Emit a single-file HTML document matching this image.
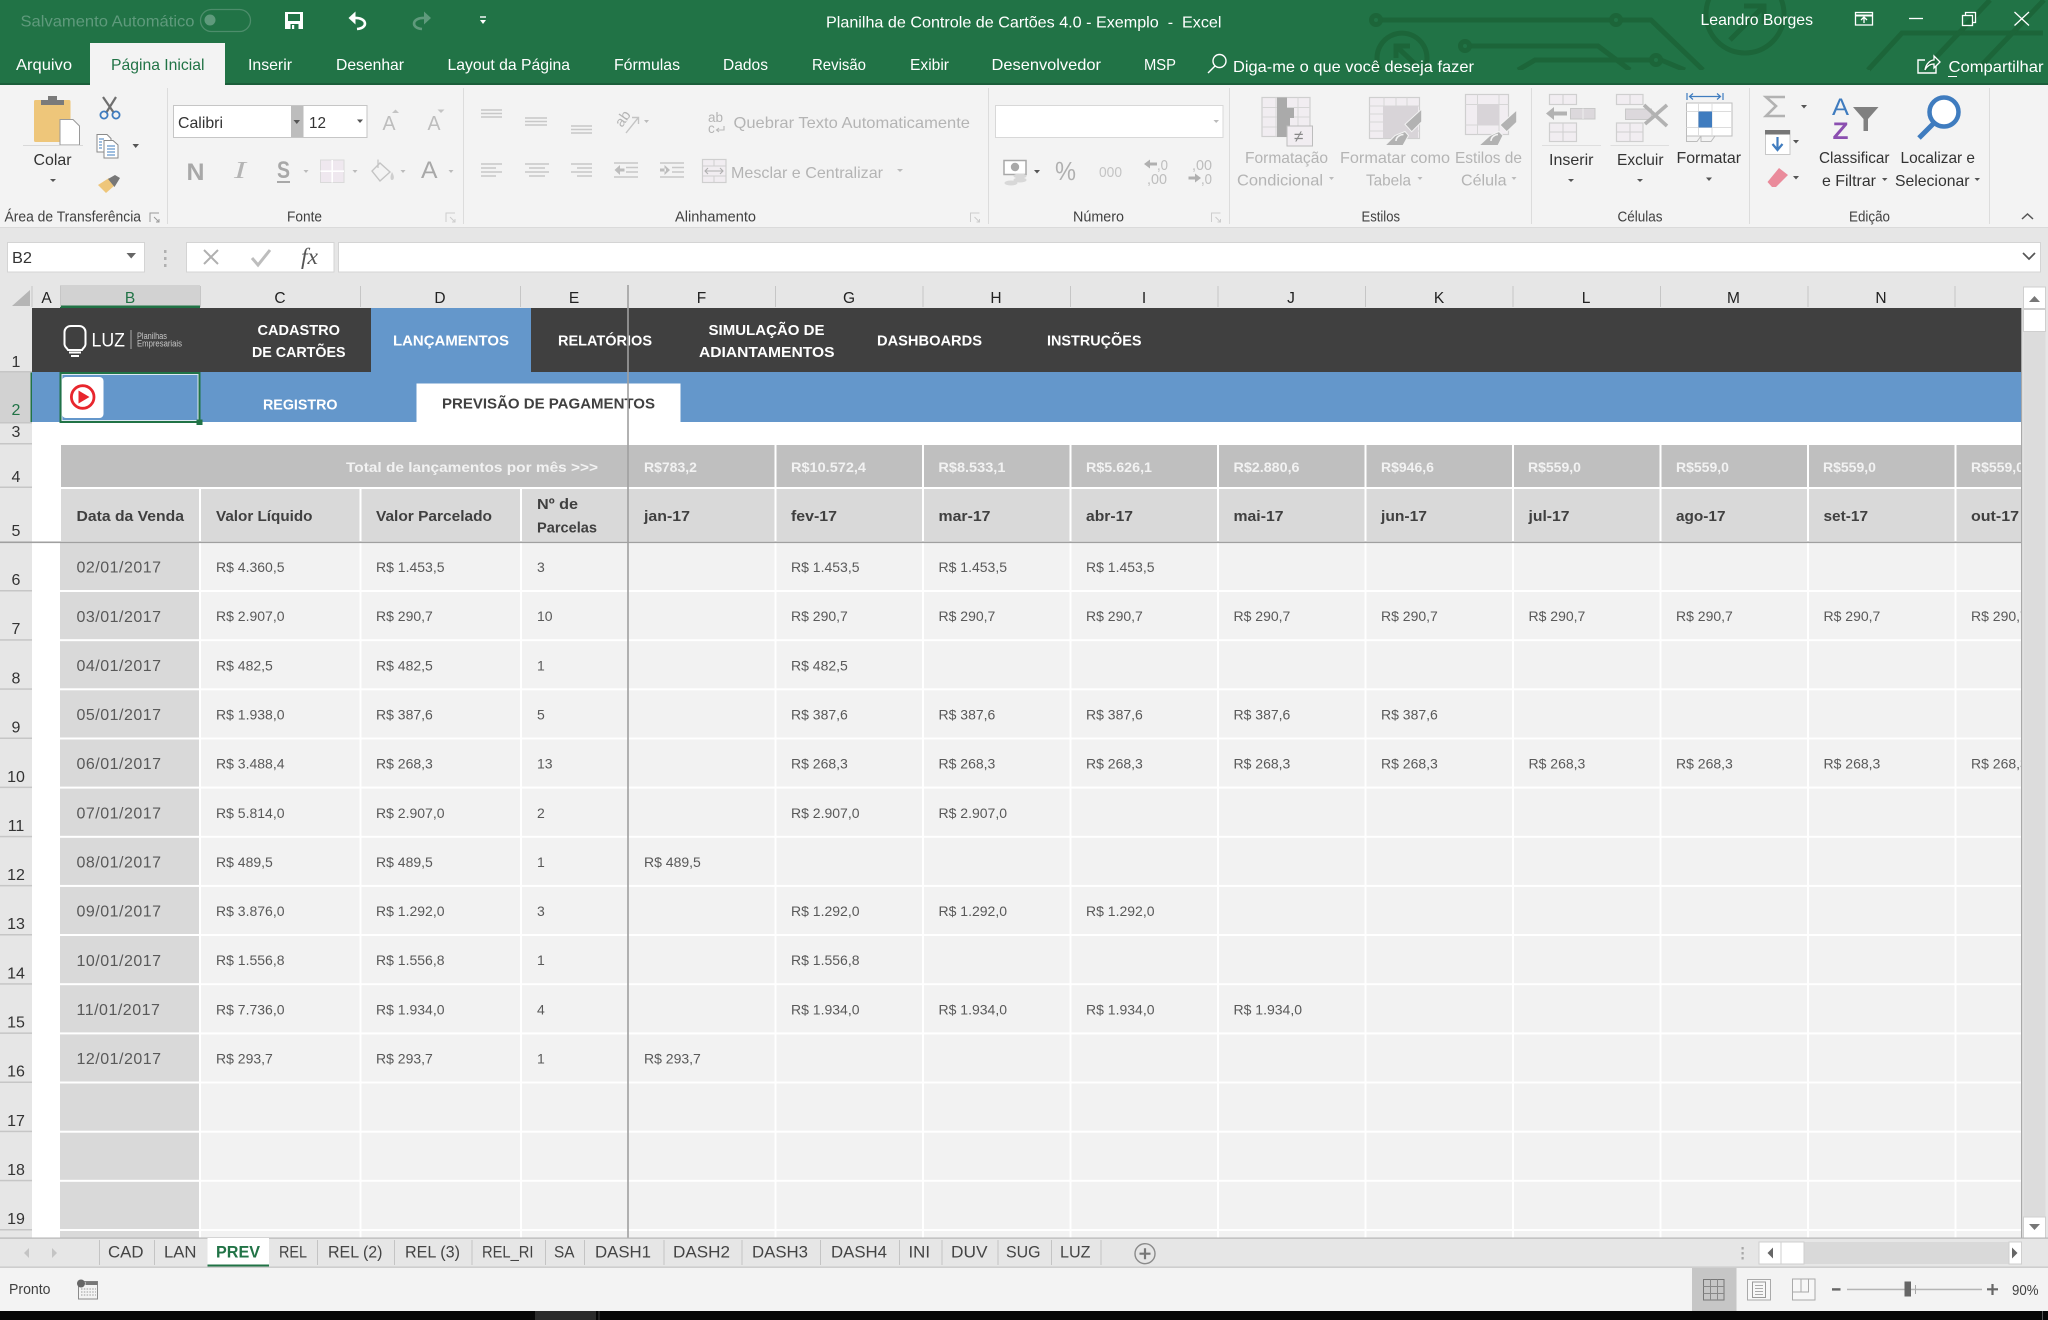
<!DOCTYPE html>
<html lang="pt-BR">
<head>
<meta charset="utf-8">
<title>Planilha de Controle de Cartões 4.0 - Exemplo - Excel</title>
<style>
html,body{margin:0;padding:0;background:#000;width:2048px;height:1320px;overflow:hidden}
svg{display:block}
text{font-family:"Liberation Sans",sans-serif;white-space:pre}
.w{fill:#fff;font-size:16px}
.tab{fill:#fff;font-size:16px}
.dim{fill:#b4b4b4;font-size:16px}
.blk{fill:#333;font-size:16px}
.lab{fill:#404040;font-size:14.5px}
.ch{fill:#222;font-size:15.5px;text-anchor:middle}
.rh{fill:#333;font-size:16px;text-anchor:middle}
.nav{fill:#fff;font-size:15px;font-weight:bold}
.tot{fill:#f2f2f2;font-size:14px;font-weight:bold}
.hd{fill:#404040;font-size:15px;font-weight:bold}
.d{fill:#595959;font-size:16px;letter-spacing:.5px}
.c{fill:#595959;font-size:14px}
.st{fill:#444;font-size:17px}
.g{fill:none;stroke:#c8c8c8;stroke-width:1.5}
.lt{fill:#f1edf1;stroke:#cfcfcf;stroke-width:1.2}
.tri{fill:#555}
.trl{fill:#bbb}
</style>
</head>
<body>
<svg width="2048" height="1320" viewBox="0 0 2048 1320" xmlns="http://www.w3.org/2000/svg">
<!-- backgrounds -->
<rect width="2048" height="1320" fill="#e6e6e6"/>
<rect width="2048" height="84" fill="#217346"/>
<rect y="83" width="2048" height="2" fill="#1b5e3a"/>
<rect y="85" width="2048" height="142" fill="#f3f3f3"/>
<rect y="227" width="2048" height="1" fill="#dadada"/>

<!-- circuit pattern -->
<g fill="none" stroke="#1c6539" stroke-width="5">
<path d="M1381 20H1611M1621 20H1651L1703 70"/>
<circle cx="1376" cy="20" r="4.5"/>
<circle cx="1616" cy="20" r="4.5"/>
<path d="M1470 46H1598L1630 70"/>
<circle cx="1465" cy="46" r="4.5"/>
<path d="M1518 70L1535 60H1651M1661 60L1685 70"/>
<circle cx="1656" cy="60" r="4.5"/>
<path d="M1380 70A25 25 0 1 1 1424 70"/>
<path d="M1415 64L1396 46M1396 58V46H1410"/>
<circle cx="1745" cy="14" r="39"/>
<path d="M1730 40L1762 8M1744 6H1764V24"/>
<path d="M1868 70L1902 33H2043"/>
<path d="M1924 70L1990 0M1977 70L2044 0"/>
</g>
<rect y="70" x="1350" width="520" height="13" fill="#217346"/>
<rect y="74" x="1870" width="178" height="9" fill="#217346"/>

<!-- title bar -->
<text x="20.5" y="26.5" style="fill:#5f9a7c;font-size:16px" textLength="174" lengthAdjust="spacingAndGlyphs">Salvamento Automático</text>
<rect x="200.5" y="9.5" width="50" height="22" rx="11" fill="none" stroke="#4d8d6b" stroke-width="1.3"/>
<circle cx="210" cy="20" r="5.5" fill="#5f9a7c"/>
<!-- save -->
<path d="M285 12H303V29H285Z" fill="#fff"/>
<rect x="288" y="14" width="12" height="7" fill="#217346"/>
<rect x="290.5" y="24" width="8" height="5" fill="#217346"/>
<rect x="292" y="25" width="2.2" height="4" fill="#fff"/>
<!-- undo redo -->
<path d="M348.5 18L355.5 11.5V24.5Z" fill="#fff"/>
<path d="M354 18C367 17 369 28 357 29" fill="none" stroke="#fff" stroke-width="2.6"/>
<path d="M431 18L424 11.5V24.5Z" fill="#5f9a7c"/>
<path d="M425 18C412 17 410 28 422 29" fill="none" stroke="#5f9a7c" stroke-width="2.6"/>
<path d="M480 17H486" stroke="#fff" stroke-width="1.4"/>
<path d="M480 20H486L483 24Z" fill="#fff"/>
<text x="826" y="27.5" class="w" textLength="395.5" lengthAdjust="spacingAndGlyphs">Planilha de Controle de Cartões 4.0 - Exemplo&#160; -&#160; Excel</text>
<text x="1700.5" y="25" class="w" textLength="112.5" lengthAdjust="spacingAndGlyphs">Leandro Borges</text>
<!-- window controls -->
<g fill="none" stroke="#fff" stroke-width="1.3">
<rect x="1855.5" y="12.5" width="17" height="12.5"/>
<path d="M1855.5 15.5H1872.5" stroke-width="2"/>
<path d="M1864 23V17.5M1861 20L1864 17L1867 20"/>
<path d="M1909 18.5H1923"/>
<rect x="1962.5" y="15.5" width="10" height="10"/>
<path d="M1965.5 15V12.5H1975.5V22.5H1973"/>
<path d="M2014.5 12L2029 25.5M2029 12L2014.5 25.5"/>
</g>

<!-- ribbon tabs -->
<rect x="90" y="43" width="135" height="42" fill="#f3f3f3"/>
<text x="16" y="70" class="tab" textLength="56" lengthAdjust="spacingAndGlyphs">Arquivo</text>
<text x="111" y="70" style="fill:#217346;font-size:16px" textLength="93.5" lengthAdjust="spacingAndGlyphs">Página Inicial</text>
<text x="248" y="70" class="tab" textLength="44" lengthAdjust="spacingAndGlyphs">Inserir</text>
<text x="336" y="70" class="tab" textLength="68" lengthAdjust="spacingAndGlyphs">Desenhar</text>
<text x="447.5" y="70" class="tab" textLength="122.5" lengthAdjust="spacingAndGlyphs">Layout da Página</text>
<text x="614" y="70" class="tab" textLength="66" lengthAdjust="spacingAndGlyphs">Fórmulas</text>
<text x="723" y="70" class="tab" textLength="45" lengthAdjust="spacingAndGlyphs">Dados</text>
<text x="812" y="70" class="tab" textLength="54" lengthAdjust="spacingAndGlyphs">Revisão</text>
<text x="910" y="70" class="tab" textLength="39" lengthAdjust="spacingAndGlyphs">Exibir</text>
<text x="991.5" y="70" class="tab" textLength="109.5" lengthAdjust="spacingAndGlyphs">Desenvolvedor</text>
<text x="1144" y="70" class="tab" textLength="32" lengthAdjust="spacingAndGlyphs">MSP</text>
<circle cx="1219.5" cy="61" r="6.5" fill="none" stroke="#fff" stroke-width="1.4"/>
<path d="M1215 66L1208 73" stroke="#fff" stroke-width="1.4"/>
<text x="1233" y="72" class="tab" textLength="241" lengthAdjust="spacingAndGlyphs">Diga-me o que você deseja fazer</text>
<path d="M1925 60H1918V73H1936V66" fill="none" stroke="#fff" stroke-width="1.4"/>
<path d="M1925 70C1926 63 1931 60 1934 60V56L1940 62L1934 68V64C1930 64 1927 66 1925 70Z" fill="none" stroke="#fff" stroke-width="1.3"/>
<text x="1948.5" y="72" class="tab" textLength="95" lengthAdjust="spacingAndGlyphs">Compartilhar</text>
<rect x="1948" y="76" width="9" height="1" fill="#fff"/>

<!-- ribbon separators -->
<g fill="#dcdcdc">
<rect x="167" y="88" width="1" height="136"/>
<rect x="463" y="88" width="1" height="136"/>
<rect x="988" y="88" width="1" height="136"/>
<rect x="1229" y="88" width="1" height="136"/>
<rect x="1531" y="88" width="1" height="136"/>
<rect x="1749" y="88" width="1" height="136"/>
<rect x="1989" y="88" width="1" height="136"/>
</g>
<!-- group labels -->
<text x="4.5" y="221.5" class="lab" textLength="136.5" lengthAdjust="spacingAndGlyphs">Área de Transferência</text>
<text x="287" y="221.5" class="lab" textLength="35" lengthAdjust="spacingAndGlyphs">Fonte</text>
<text x="675" y="221.5" class="lab" textLength="81" lengthAdjust="spacingAndGlyphs">Alinhamento</text>
<text x="1073" y="221.5" class="lab" textLength="51" lengthAdjust="spacingAndGlyphs">Número</text>
<text x="1361.5" y="221.5" class="lab" textLength="38.5" lengthAdjust="spacingAndGlyphs">Estilos</text>
<text x="1617.5" y="221.5" class="lab" textLength="45" lengthAdjust="spacingAndGlyphs">Células</text>
<text x="1849" y="221.5" class="lab" textLength="41" lengthAdjust="spacingAndGlyphs">Edição</text>
<!-- launchers -->
<g fill="none" stroke="#9a9a9a" stroke-width="1">
<path d="M150 222V213H159M154 217L159 222M156 222H159V219"/>
</g>
<g fill="none" stroke="#cdcdcd" stroke-width="1">
<path d="M446 222V213H455M450 217L455 222M452 222H455V219"/>
<path d="M970.5 222V213H979.5M974.5 217L979.5 222M976.5 222H979.5V219"/>
<path d="M1211.5 222V213H1220.5M1215.5 217L1220.5 222M1217.5 222H1220.5V219"/>
</g>
<path d="M2022 219L2027.5 214L2033 219" fill="none" stroke="#555" stroke-width="1.5"/>

<!-- clipboard group -->
<rect x="34" y="100" width="36.5" height="42" rx="1.5" fill="#eec67a"/>
<path d="M41 105V100H48V96H57V100H64V105Z" fill="#7a7a7a"/>
<path d="M60 119.5H73L79.5 126V145H60Z" fill="#fff" stroke="#9a9a9a" stroke-width="1"/>
<rect x="23" y="145" width="60" height="1" fill="#d8d8d8"/>
<text x="33.5" y="165" class="blk" textLength="38" lengthAdjust="spacingAndGlyphs">Colar</text>
<path class="tri" d="M50 179H56L53 182Z"/>
<path d="M103 97L114 113M116 97L106 113" stroke="#6f6f6f" stroke-width="2.2" fill="none"/>
<circle cx="104" cy="115" r="3.6" fill="none" stroke="#3f7cbf" stroke-width="1.8"/>
<circle cx="116" cy="115" r="3.6" fill="none" stroke="#3f7cbf" stroke-width="1.8"/>
<path d="M97 134.5H107L111 138.5V152H97Z" fill="#fff" stroke="#8a8a8a"/>
<path d="M104 140.5H113L118 145V158H104Z" fill="#fff" stroke="#8a8a8a"/>
<path d="M107 146H115M107 149H115M107 152H115M107 155H115M99 139H104M99 142H102M99 145H102M99 148H102" stroke="#3f7cbf" stroke-width="1"/>
<path class="tri" d="M132.5 144H139L135.7 148Z"/>
<path d="M98 185L109 178L114 186L106 193Z" fill="#eec67a"/>
<path d="M108 179L115 175L120 178L114.5 187Z" fill="#777"/>

<!-- font group -->
<rect x="173.5" y="105.5" width="193.5" height="32" fill="#fff" stroke="#c6c6c6"/>
<rect x="291" y="106" width="12.5" height="31" fill="#bdbdbd"/>
<path class="tri" d="M293.5 120H300L296.8 124Z"/>
<text x="178" y="128" class="blk" textLength="45" lengthAdjust="spacingAndGlyphs">Calibri</text>
<text x="309" y="128" class="blk" textLength="17" lengthAdjust="spacingAndGlyphs">12</text>
<path class="tri" d="M357 119.5H363L360 123Z"/>
<text x="382.5" y="130" style="fill:#bdbdbd;font-size:20px" textLength="13" lengthAdjust="spacingAndGlyphs">A</text>
<path d="M392 113L395.5 109.5L399 113Z" fill="#c4c4c4"/>
<text x="427.5" y="130" style="fill:#bdbdbd;font-size:20px" textLength="13" lengthAdjust="spacingAndGlyphs">A</text>
<path d="M437.5 109.5H444.5L441 113Z" fill="#c4c4c4"/>
<text x="186.5" y="180" style="fill:#a8a8a8;font-size:24px;font-weight:bold" textLength="18" lengthAdjust="spacingAndGlyphs">N</text>
<text x="234" y="178" style="fill:#b4b4b4;font-size:24px;font-style:italic;font-family:'Liberation Serif',serif" textLength="12" lengthAdjust="spacingAndGlyphs">I</text>
<text x="277" y="178" style="fill:#a8a8a8;font-size:24px;font-weight:bold" textLength="13" lengthAdjust="spacingAndGlyphs">S</text>
<rect x="277" y="181" width="13" height="2" fill="#a8a8a8"/>
<path class="trl" d="M303.5 170H308.5L306 173Z"/>
<rect x="320.5" y="160" width="23.5" height="22.5" fill="#efe8ef" stroke="#dadada"/>
<path d="M332.2 160V182.5M320.5 171.2H344" stroke="#fff" stroke-width="1.6"/>
<path class="trl" d="M352.5 170H357.5L355 173Z"/>
<path d="M380 163L390 172L380 181L372 171Z" fill="none" stroke="#c4c4c4" stroke-width="1.4"/>
<path d="M378 159.5V168" stroke="#c4c4c4" stroke-width="1.2"/>
<path d="M392 172C395 177 394 180 392 180C390 180 390 176 392 172Z" fill="#cfcfcf"/>
<path class="trl" d="M400.5 170H405.5L403 173Z"/>
<text x="421" y="178" style="fill:#a8a8a8;font-size:24px" textLength="16.5" lengthAdjust="spacingAndGlyphs">A</text>
<path class="trl" d="M448.5 170H453.5L451 173Z"/>

<!-- alignment group -->
<g class="g">
<path d="M481 110H502M481 113.5H502M481 117H502"/>
<path d="M525 118H547M525 121.5H547M525 125H547"/>
<path d="M571 126H592M571 129.5H592M571 133H592"/>
<path d="M481 164H502M481 168H496M481 172H502M481 176H496"/>
<path d="M525 164H549M529 168H545M525 172H549M529 176H545"/>
<path d="M571 164H592M577 168H592M571 172H592M577 176H592"/>
<path d="M614 163H638M626 167.5H638M626 172H638M614 177H638"/>
<path d="M660 163H684M672 167.5H684M672 172H684M660 177H684"/>
</g>
<path d="M614.5 170L620 165V175ZM619 168.5H624.5V171.5H619Z" fill="#bdbdbd"/>
<path d="M670 170L664.5 165V175ZM660 168.5H666V171.5H660Z" fill="#bdbdbd"/>
<text x="0" y="0" transform="translate(622,128) rotate(-55)" style="fill:#b4b4b4;font-size:14.5px">ab</text>
<path d="M626 133L638 118M632 117.5H638.5V124" fill="none" stroke="#c4c4c4" stroke-width="1.4"/>
<path class="trl" d="M644 120H649L646.5 123Z"/>
<text x="708" y="122" style="fill:#b4b4b4;font-size:13.5px">ab</text>
<text x="708" y="133" style="fill:#b4b4b4;font-size:13.5px">c</text>
<path d="M724 126V130H717M719 128L716.5 130L719 132" fill="none" stroke="#b8b8b8" stroke-width="1.1"/>
<text x="733.5" y="128" class="dim" textLength="236.5" lengthAdjust="spacingAndGlyphs">Quebrar Texto Automaticamente</text>
<rect x="702.5" y="159.5" width="23.5" height="23" class="lt"/>
<path d="M702.5 166H726M702.5 176H726M714 159.5V166M714 176V182.5" fill="none" stroke="#cfcfcf"/>
<path d="M705 171H723M708 168L705 171L708 174M720 168L723 171L720 174" fill="none" stroke="#b0b0b0" stroke-width="1.1"/>
<text x="731" y="178" class="dim" textLength="152" lengthAdjust="spacingAndGlyphs">Mesclar e Centralizar</text>
<path class="trl" d="M897 169H903L900 172Z"/>

<!-- number group -->
<rect x="995.5" y="105.5" width="227.5" height="32" fill="#fff" stroke="#d8d8d8"/>
<path class="trl" d="M1213.5 120H1219L1216.2 123Z"/>
<rect x="1004" y="160.5" width="22" height="14" fill="#fff" stroke="#a8a8a8" stroke-width="1.5"/>
<circle cx="1015" cy="167" r="4.2" fill="#a8a8a8"/>
<ellipse cx="1020" cy="176" rx="6.5" ry="2.5" fill="#d8d8d8"/>
<ellipse cx="1020" cy="180" rx="6.5" ry="2.5" fill="#d8d8d8"/>
<ellipse cx="1011" cy="183" rx="6.5" ry="2.5" fill="#d8d8d8"/>
<path class="tri" d="M1034 170H1040L1037 173.5Z"/>
<text x="1055" y="180" style="fill:#b0b0b0;font-size:26px" textLength="21" lengthAdjust="spacingAndGlyphs">%</text>
<text x="1099" y="177" style="fill:#c4c4c4;font-size:15px" textLength="23" lengthAdjust="spacingAndGlyphs">000</text>
<path d="M1144 164L1150 159.5V162.5H1157V165.5H1150V168.5Z" fill="#b0b0b0"/>
<text x="1157" y="170" style="fill:#bdbdbd;font-size:15px" textLength="11" lengthAdjust="spacingAndGlyphs">,0</text>
<text x="1147" y="184" style="fill:#bdbdbd;font-size:15px" textLength="20" lengthAdjust="spacingAndGlyphs">,00</text>
<text x="1192" y="170" style="fill:#bdbdbd;font-size:15px" textLength="20" lengthAdjust="spacingAndGlyphs">,00</text>
<path d="M1201 178L1195 173.5V176.5H1188.5V179.5H1195V182.5Z" fill="#b0b0b0"/>
<text x="1201" y="184" style="fill:#bdbdbd;font-size:15px" textLength="11" lengthAdjust="spacingAndGlyphs">,0</text>

<!-- styles group -->
<rect x="1262" y="97.5" width="48" height="39" class="lt"/>
<path d="M1262 107.5H1310M1262 117H1310M1262 127H1310M1276 97.5V136.5M1298 97.5V136.5" fill="none" stroke="#d6d6d6"/>
<path d="M1277 97.5H1287V108H1294V118H1290V127H1287V137H1277Z" fill="#aaa"/>
<rect x="1287" y="126" width="25.5" height="20" fill="#f1edf1" stroke="#bdbdbd"/>
<text x="1294" y="142" style="fill:#888;font-size:17px">≠</text>
<text x="1245" y="163" class="dim" textLength="83" lengthAdjust="spacingAndGlyphs">Formatação</text>
<text x="1237" y="185.5" class="dim" textLength="86" lengthAdjust="spacingAndGlyphs">Condicional</text>
<path class="trl" d="M1329 177H1334L1331.5 180Z"/>

<rect x="1369.5" y="97.5" width="50" height="41" class="lt"/>
<path d="M1369.5 106H1419.5M1369.5 114H1419.5M1369.5 122H1419.5M1369.5 131H1419.5M1384 97.5V138.5M1396 97.5V138.5M1407 97.5V138.5" fill="none" stroke="#d6d6d6"/>
<rect x="1383" y="106" width="35" height="32" fill="#d8d4d8"/>
<path d="M1421.7 109V121.7L1411.7 131.7L1405 124.3Z" fill="#b2b2b2" stroke="#f3f3f3" stroke-width="1"/>
<path d="M1385 145.5L1395 135.5L1405 131.5L1408.5 135.5L1403 145.5Z" fill="#b2b2b2" stroke="#f3f3f3" stroke-width="1"/>
<path d="M1396 141C1396 137 1400 134.5 1403.5 134.5" fill="none" stroke="#f3f3f3" stroke-width="1.6"/>
<text x="1340" y="163" class="dim" textLength="110" lengthAdjust="spacingAndGlyphs">Formatar como</text>
<text x="1366" y="185.5" class="dim" textLength="45" lengthAdjust="spacingAndGlyphs">Tabela</text>
<path class="trl" d="M1417.5 177H1422.5L1420 180Z"/>

<rect x="1465.5" y="94.5" width="43" height="40" class="lt"/>
<path d="M1465.5 104.5H1508.5M1465.5 125H1508.5M1477.5 94.5V134.5M1499 94.5V134.5" fill="none" stroke="#d6d6d6"/>
<rect x="1477.5" y="104.5" width="21.5" height="20.5" fill="#d8d4d8"/>
<path d="M1516.7 110V122.3L1506.7 131.7L1500 125Z" fill="#b2b2b2" stroke="#f3f3f3" stroke-width="1"/>
<path d="M1479 145.5L1490 135.5L1499 131.5L1503 135.5L1498 145.5Z" fill="#b2b2b2" stroke="#f3f3f3" stroke-width="1"/>
<path d="M1491 141C1491 137 1495 134.5 1498 134.5" fill="none" stroke="#f3f3f3" stroke-width="1.6"/>
<text x="1455" y="163" class="dim" textLength="67" lengthAdjust="spacingAndGlyphs">Estilos de</text>
<text x="1461" y="185.5" class="dim" textLength="45.5" lengthAdjust="spacingAndGlyphs">Célula</text>
<path class="trl" d="M1511.5 177H1516.5L1514 180Z"/>

<!-- cells group -->
<rect x="1549.5" y="94.5" width="27" height="10" class="lt"/><path d="M1563 94.5V104.5" stroke="#cfcfcf"/>
<path d="M1546 113.5L1554 107V111.5H1567V115.5H1554V120Z" fill="#b2b2b2"/>
<rect x="1570.5" y="108.5" width="24.5" height="10.5" fill="#dcd8dc" stroke="#c8c8c8"/><path d="M1583 108.5V119" stroke="#eee"/>
<rect x="1549.5" y="123" width="27" height="18.5" class="lt"/><path d="M1563 123V141.5M1549.5 132H1576.5" stroke="#cfcfcf"/>
<rect x="1542" y="145" width="59" height="1" fill="#dedede"/>
<text x="1549" y="165" class="blk" textLength="44.5" lengthAdjust="spacingAndGlyphs">Inserir</text>
<path class="tri" d="M1568 179H1574L1571 182Z"/>

<rect x="1616.5" y="94.5" width="26.5" height="10" class="lt"/><path d="M1630 94.5V104.5" stroke="#cfcfcf"/>
<rect x="1625.5" y="109" width="26" height="10.5" fill="#dcd8dc" stroke="#c8c8c8"/>
<path d="M1644 105L1667 126M1667 105L1645 124" stroke="#b2b2b2" stroke-width="3.6" fill="none"/>
<rect x="1616.5" y="123" width="26.5" height="18.5" class="lt"/><path d="M1630 123V141.5M1616.5 132H1643" stroke="#cfcfcf"/>
<rect x="1610.5" y="145" width="58.5" height="1" fill="#dedede"/>
<text x="1617" y="165" class="blk" textLength="46.5" lengthAdjust="spacingAndGlyphs">Excluir</text>
<path class="tri" d="M1637 179H1643L1640 182Z"/>

<path d="M1690 96.5H1720M1693 93.5L1689.5 96.5L1693 99.5M1717 93.5L1720.5 96.5L1717 99.5M1687 93V100M1723 93V100" fill="none" stroke="#3f7cbf" stroke-width="1.2"/>
<rect x="1686.5" y="103" width="45.5" height="33" fill="#fff" stroke="#bcbcbc"/>
<path d="M1686.5 111.5H1732M1686.5 127.5H1732M1698.5 103V136M1712 103V136" stroke="#dcdcdc" fill="none"/>
<rect x="1698.5" y="111.5" width="13.5" height="16" fill="#3f7cbf"/>
<path d="M1686.5 136V141.5H1697L1701 136M1701 136V141.5H1711L1715 136" fill="none" stroke="#bcbcbc"/>
<text x="1676.5" y="163" class="blk" textLength="64.5" lengthAdjust="spacingAndGlyphs">Formatar</text>
<path class="tri" d="M1706 177.5H1712L1709 181Z"/>

<!-- editing group -->
<path d="M1785 97H1766L1776 106L1766 116H1785" fill="none" stroke="#b2b2b2" stroke-width="2.6"/>
<path class="tri" d="M1801 105H1807L1804 108.5Z"/>
<rect x="1765.5" y="130.5" width="24.5" height="24" fill="#fff" stroke="#c8c8c8"/>
<rect x="1765" y="130" width="25" height="4.5" fill="#777"/>
<path d="M1777.5 137V149M1772.5 144L1777.5 150L1782.5 144" fill="none" stroke="#3f7cbf" stroke-width="2.2"/>
<path class="tri" d="M1793 140H1799L1796 143.5Z"/>
<path d="M1779 168L1788 175L1776 187H1772L1767.5 182Z" fill="#ea8b9b"/>
<path class="tri" d="M1793 176H1799L1796 179.5Z"/>
<text x="1832" y="115" style="fill:#3f7cbf;font-size:24px" textLength="17" lengthAdjust="spacingAndGlyphs">A</text>
<text x="1832.5" y="139" style="fill:#8b4fb0;font-size:24px;font-weight:bold" textLength="16" lengthAdjust="spacingAndGlyphs">Z</text>
<path d="M1853 107H1878.5L1868 119V131H1863.5V119Z" fill="#808080"/>
<text x="1819" y="163" class="blk" textLength="70.5" lengthAdjust="spacingAndGlyphs">Classificar</text>
<text x="1822" y="186" class="blk" textLength="54" lengthAdjust="spacingAndGlyphs">e Filtrar</text>
<path class="tri" d="M1882 178H1887.5L1884.7 181Z"/>
<circle cx="1944" cy="112" r="14.5" fill="#fff" stroke="#3f7cbf" stroke-width="4.5"/>
<path d="M1933 124L1919 138" stroke="#3f7cbf" stroke-width="5"/>
<text x="1900.5" y="163" class="blk" textLength="74.5" lengthAdjust="spacingAndGlyphs">Localizar e</text>
<text x="1895" y="186" class="blk" textLength="74.5" lengthAdjust="spacingAndGlyphs">Selecionar</text>
<path class="tri" d="M1974.5 178H1980L1977.2 181Z"/>

<!-- formula bar -->
<rect x="7.5" y="242.5" width="137" height="29.5" fill="#fff" stroke="#d4d4d4"/>
<text x="12" y="263" class="blk" textLength="20" lengthAdjust="spacingAndGlyphs">B2</text>
<path d="M126.5 253H136L131.2 258.5Z" fill="#666"/>
<g fill="#b0b0b0"><rect x="164" y="250" width="2.5" height="3"/><rect x="164" y="257" width="2.5" height="3"/><rect x="164" y="264" width="2.5" height="3"/></g>
<rect x="186.5" y="242.5" width="147.5" height="29.5" fill="#fff" stroke="#d4d4d4"/>
<path d="M204 250L218 264M218 250L204 264" stroke="#b0b0b0" stroke-width="2" fill="none"/>
<path d="M252 258L258 265L270 250" stroke="#bdbdbd" stroke-width="3" fill="none"/>
<text x="301" y="264" style="fill:#555;font-family:'Liberation Serif',serif;font-style:italic;font-size:23px" textLength="17" lengthAdjust="spacingAndGlyphs">fx</text>
<rect x="338.5" y="242.5" width="1702" height="29.5" fill="#fff" stroke="#d4d4d4"/>
<path d="M2023 253L2029 259L2035 253" fill="none" stroke="#555" stroke-width="1.7"/>

<!-- sheet area -->
<rect x="32" y="308" width="1990" height="930" fill="#fff"/>
<!-- column headers -->
<rect x="0" y="285" width="2022" height="23" fill="#e6e6e6"/>
<rect x="60" y="285" width="140" height="21" fill="#d2d2d2"/>
<rect x="60" y="305.5" width="140" height="2.5" fill="#217346"/>
<path d="M12 306H30V290Z" fill="#b5b5b5"/>
<g fill="#c6c6c6">
<rect x="31.5" y="286" width="1" height="21"/><rect x="60" y="286" width="1" height="21"/><rect x="200" y="286" width="1" height="21"/><rect x="360" y="286" width="1" height="21"/><rect x="520" y="286" width="1" height="21"/><rect x="775" y="286" width="1" height="21"/><rect x="922.5" y="286" width="1" height="21"/><rect x="1070" y="286" width="1" height="21"/><rect x="1217.5" y="286" width="1" height="21"/><rect x="1365" y="286" width="1" height="21"/><rect x="1512.5" y="286" width="1" height="21"/><rect x="1660" y="286" width="1" height="21"/><rect x="1807.5" y="286" width="1" height="21"/><rect x="1954.5" y="286" width="1" height="21"/>
</g>
<text x="46.5" y="303" class="ch">A</text>
<text x="130" y="303" class="ch" style="fill:#217346">B</text>
<text x="280" y="303" class="ch">C</text>
<text x="440" y="303" class="ch">D</text>
<text x="574" y="303" class="ch">E</text>
<text x="701.5" y="303" class="ch">F</text>
<text x="849" y="303" class="ch">G</text>
<text x="996" y="303" class="ch">H</text>
<text x="1144" y="303" class="ch">I</text>
<text x="1291" y="303" class="ch">J</text>
<text x="1439" y="303" class="ch">K</text>
<text x="1586" y="303" class="ch">L</text>
<text x="1733.5" y="303" class="ch">M</text>
<text x="1881" y="303" class="ch">N</text>

<!-- row headers -->
<rect x="0" y="308" width="32" height="930" fill="#e6e6e6"/>
<rect x="0" y="372" width="32" height="50" fill="#d2d2d2"/>
<rect x="30.5" y="372" width="2" height="50" fill="#217346"/>
<g fill="#c6c6c6">
<rect y="371" width="32" height="1.5"/><rect y="422" width="32" height="1.5"/><rect y="443" width="32" height="1.5"/><rect y="486.5" width="32" height="1.5"/><rect y="590" width="32" height="1.5"/><rect y="639.2" width="32" height="1.5"/><rect y="688.3" width="32" height="1.5"/><rect y="737.5" width="32" height="1.5"/><rect y="786.6" width="32" height="1.5"/><rect y="835.8" width="32" height="1.5"/><rect y="884.9" width="32" height="1.5"/><rect y="934" width="32" height="1.5"/><rect y="983.2" width="32" height="1.5"/><rect y="1032.4" width="32" height="1.5"/><rect y="1081.5" width="32" height="1.5"/><rect y="1130.7" width="32" height="1.5"/><rect y="1179.8" width="32" height="1.5"/><rect y="1229" width="32" height="1.5"/>
</g>
<text x="16" y="367" class="rh">1</text>
<text x="16" y="415" class="rh" style="fill:#217346">2</text>
<text x="16" y="437" class="rh">3</text>
<text x="16" y="482.2" class="rh">4</text>
<text x="16" y="536.2" class="rh">5</text>
<text x="16" y="585.2" class="rh">6</text>
<text x="16" y="634.2" class="rh">7</text>
<text x="16" y="683.5" class="rh">8</text>
<text x="16" y="732.7" class="rh">9</text>
<text x="16" y="781.8" class="rh">10</text>
<text x="16" y="831" class="rh">11</text>
<text x="16" y="880.1" class="rh">12</text>
<text x="16" y="929.2" class="rh">13</text>
<text x="16" y="978.4" class="rh">14</text>
<text x="16" y="1027.6" class="rh">15</text>
<text x="16" y="1076.7" class="rh">16</text>
<text x="16" y="1125.9" class="rh">17</text>
<text x="16" y="1175" class="rh">18</text>
<text x="16" y="1224.2" class="rh">19</text>

<!-- nav band -->
<rect x="32" y="308" width="1990" height="64" fill="#404040"/>
<rect x="371" y="308" width="160" height="64" fill="#6497cb"/>
<rect x="32" y="372" width="1990" height="50" fill="#6497cb"/>
<rect x="416.5" y="383.5" width="264" height="38.5" fill="#fff"/>
<!-- logo -->
<path d="M71 326H79C83 326 85.5 329 85.5 332V344C85.5 347 83 348 82 350H68C67 348 64.5 347 64.5 344V332C64.5 329 67 326 71 326Z" fill="none" stroke="#fff" stroke-width="2"/>
<path d="M69 352.5H81M71 356H79" stroke="#fff" stroke-width="2"/>
<text x="91.5" y="346.5" style="fill:#fff;font-size:19.5px" textLength="33.5" lengthAdjust="spacingAndGlyphs">LUZ</text>
<rect x="130.5" y="330" width="1" height="19" fill="#aaa"/>
<text x="137" y="339" style="fill:#c8c8c8;font-size:9px" textLength="30" lengthAdjust="spacingAndGlyphs">Planilhas</text>
<text x="137" y="346.7" style="fill:#c8c8c8;font-size:9px" textLength="45" lengthAdjust="spacingAndGlyphs">Empresariais</text>
<!-- nav labels -->
<text x="257.5" y="335" class="nav" textLength="82.5" lengthAdjust="spacingAndGlyphs">CADASTRO</text>
<text x="252" y="357" class="nav" textLength="93.5" lengthAdjust="spacingAndGlyphs">DE CARTÕES</text>
<text x="393" y="345.7" class="nav" textLength="116" lengthAdjust="spacingAndGlyphs">LANÇAMENTOS</text>
<text x="558" y="345.7" class="nav" textLength="94" lengthAdjust="spacingAndGlyphs">RELATÓRIOS</text>
<text x="708.5" y="335" class="nav" textLength="116" lengthAdjust="spacingAndGlyphs">SIMULAÇÃO DE</text>
<text x="699" y="357" class="nav" textLength="135.5" lengthAdjust="spacingAndGlyphs">ADIANTAMENTOS</text>
<text x="877" y="345.7" class="nav" textLength="105" lengthAdjust="spacingAndGlyphs">DASHBOARDS</text>
<text x="1047" y="345.7" class="nav" textLength="94.5" lengthAdjust="spacingAndGlyphs">INSTRUÇÕES</text>
<text x="263" y="409.4" class="nav" textLength="74.5" lengthAdjust="spacingAndGlyphs">REGISTRO</text>
<text x="442" y="408.6" class="nav" style="fill:#404040" textLength="213" lengthAdjust="spacingAndGlyphs">PREVISÃO DE PAGAMENTOS</text>
<!-- B2 selection + play button -->
<rect x="62" y="374.5" width="136" height="46" fill="none" stroke="#dfe9f3" stroke-width="1"/>
<rect x="60.5" y="373" width="139" height="49" fill="none" stroke="#217346" stroke-width="2"/>
<rect x="62" y="377" width="41.5" height="41" rx="4" fill="#fff"/>
<circle cx="82.7" cy="397" r="11.3" fill="none" stroke="#e8262d" stroke-width="2.8"/>
<path d="M78.5 390.5L89.5 397L78.5 403.5Z" fill="#e8262d"/>
<rect x="196.5" y="419.5" width="6" height="5.5" fill="#217346"/>

<!-- table fills -->
<rect x="61" y="445" width="1961" height="42" fill="#bfbfbf"/>
<rect x="61" y="489" width="1961" height="52" fill="#d9d9d9"/>
<rect x="60" y="543" width="1962" height="695" fill="#f2f2f2"/>
<rect x="60" y="543" width="139" height="695" fill="#d9d9d9"/>
<!-- white grid lines -->
<g fill="#fff">
<rect x="60" y="590" width="1962" height="2"/><rect x="60" y="639.2" width="1962" height="2"/><rect x="60" y="688.3" width="1962" height="2"/><rect x="60" y="737.5" width="1962" height="2"/><rect x="60" y="786.6" width="1962" height="2"/><rect x="60" y="835.8" width="1962" height="2"/><rect x="60" y="884.9" width="1962" height="2"/><rect x="60" y="934" width="1962" height="2"/><rect x="60" y="983.2" width="1962" height="2"/><rect x="60" y="1032.4" width="1962" height="2"/><rect x="60" y="1081.5" width="1962" height="2"/><rect x="60" y="1130.7" width="1962" height="2"/><rect x="60" y="1179.8" width="1962" height="2"/><rect x="60" y="1229" width="1962" height="2"/>
<rect x="199" y="489" width="2" height="749"/><rect x="359.5" y="489" width="2" height="749"/><rect x="520" y="489" width="2" height="749"/>
<rect x="774.5" y="445" width="2" height="793"/><rect x="922" y="445" width="2" height="793"/><rect x="1069.5" y="445" width="2" height="793"/><rect x="1217" y="445" width="2" height="793"/><rect x="1364.5" y="445" width="2" height="793"/><rect x="1512" y="445" width="2" height="793"/><rect x="1659.5" y="445" width="2" height="793"/><rect x="1807" y="445" width="2" height="793"/><rect x="1954.5" y="445" width="2" height="793"/>
</g>

<!-- row 4 -->
<text x="346" y="472" class="tot" textLength="252" lengthAdjust="spacingAndGlyphs">Total de lançamentos por mês &gt;&gt;&gt;</text>
<text x="644" y="472" class="tot">R$783,2</text>
<text x="791" y="472" class="tot" textLength="75" lengthAdjust="spacingAndGlyphs">R$10.572,4</text>
<text x="938.4" y="472" class="tot" textLength="67" lengthAdjust="spacingAndGlyphs">R$8.533,1</text>
<text x="1086" y="472" class="tot" textLength="66" lengthAdjust="spacingAndGlyphs">R$5.626,1</text>
<text x="1233.5" y="472" class="tot" textLength="66" lengthAdjust="spacingAndGlyphs">R$2.880,6</text>
<text x="1381" y="472" class="tot">R$946,6</text>
<text x="1528" y="472" class="tot">R$559,0</text>
<text x="1676" y="472" class="tot">R$559,0</text>
<text x="1823" y="472" class="tot">R$559,0</text>
<text x="1971" y="472" class="tot">R$559,0</text>

<!-- row 5 -->
<text x="76.5" y="521" class="hd" textLength="107.5" lengthAdjust="spacingAndGlyphs">Data da Venda</text>
<text x="216" y="521" class="hd" textLength="96.5" lengthAdjust="spacingAndGlyphs">Valor Líquido</text>
<text x="376" y="521" class="hd" textLength="116" lengthAdjust="spacingAndGlyphs">Valor Parcelado</text>
<text x="537" y="509" class="hd" textLength="41" lengthAdjust="spacingAndGlyphs">Nº de</text>
<text x="537" y="532.5" class="hd" textLength="60" lengthAdjust="spacingAndGlyphs">Parcelas</text>
<text x="644" y="521" class="hd" textLength="46" lengthAdjust="spacingAndGlyphs">jan-17</text>
<text x="791" y="521" class="hd" textLength="46" lengthAdjust="spacingAndGlyphs">fev-17</text>
<text x="938.5" y="521" class="hd" textLength="52" lengthAdjust="spacingAndGlyphs">mar-17</text>
<text x="1086" y="521" class="hd" textLength="47" lengthAdjust="spacingAndGlyphs">abr-17</text>
<text x="1233.5" y="521" class="hd" textLength="50" lengthAdjust="spacingAndGlyphs">mai-17</text>
<text x="1381" y="521" class="hd" textLength="46" lengthAdjust="spacingAndGlyphs">jun-17</text>
<text x="1528.5" y="521" class="hd" textLength="41" lengthAdjust="spacingAndGlyphs">jul-17</text>
<text x="1676" y="521" class="hd" textLength="49.5" lengthAdjust="spacingAndGlyphs">ago-17</text>
<text x="1823.5" y="521" class="hd" textLength="44.5" lengthAdjust="spacingAndGlyphs">set-17</text>
<text x="1971" y="521" class="hd" textLength="48" lengthAdjust="spacingAndGlyphs">out-17</text>

<!-- data rows -->
<g transform="translate(0,572)"><text x="76.5" y=".6" class="d">02/01/2017</text><text x="216" class="c">R$ 4.360,5</text><text x="376" class="c">R$ 1.453,5</text><text x="537" class="c">3</text><text x="791" class="c">R$ 1.453,5</text><text x="938.5" class="c">R$ 1.453,5</text><text x="1086" class="c">R$ 1.453,5</text></g>
<g transform="translate(0,621.15)"><text x="76.5" y=".6" class="d">03/01/2017</text><text x="216" class="c">R$ 2.907,0</text><text x="376" class="c">R$ 290,7</text><text x="537" class="c">10</text><text x="791" class="c">R$ 290,7</text><text x="938.5" class="c">R$ 290,7</text><text x="1086" class="c">R$ 290,7</text><text x="1233.5" class="c">R$ 290,7</text><text x="1381" class="c">R$ 290,7</text><text x="1528.5" class="c">R$ 290,7</text><text x="1676" class="c">R$ 290,7</text><text x="1823.5" class="c">R$ 290,7</text><text x="1971" class="c">R$ 290,7</text></g>
<g transform="translate(0,670.3)"><text x="76.5" y=".6" class="d">04/01/2017</text><text x="216" class="c">R$ 482,5</text><text x="376" class="c">R$ 482,5</text><text x="537" class="c">1</text><text x="791" class="c">R$ 482,5</text></g>
<g transform="translate(0,719.45)"><text x="76.5" y=".6" class="d">05/01/2017</text><text x="216" class="c">R$ 1.938,0</text><text x="376" class="c">R$ 387,6</text><text x="537" class="c">5</text><text x="791" class="c">R$ 387,6</text><text x="938.5" class="c">R$ 387,6</text><text x="1086" class="c">R$ 387,6</text><text x="1233.5" class="c">R$ 387,6</text><text x="1381" class="c">R$ 387,6</text></g>
<g transform="translate(0,768.6)"><text x="76.5" y=".6" class="d">06/01/2017</text><text x="216" class="c">R$ 3.488,4</text><text x="376" class="c">R$ 268,3</text><text x="537" class="c">13</text><text x="791" class="c">R$ 268,3</text><text x="938.5" class="c">R$ 268,3</text><text x="1086" class="c">R$ 268,3</text><text x="1233.5" class="c">R$ 268,3</text><text x="1381" class="c">R$ 268,3</text><text x="1528.5" class="c">R$ 268,3</text><text x="1676" class="c">R$ 268,3</text><text x="1823.5" class="c">R$ 268,3</text><text x="1971" class="c">R$ 268,3</text></g>
<g transform="translate(0,817.75)"><text x="76.5" y=".6" class="d">07/01/2017</text><text x="216" class="c">R$ 5.814,0</text><text x="376" class="c">R$ 2.907,0</text><text x="537" class="c">2</text><text x="791" class="c">R$ 2.907,0</text><text x="938.5" class="c">R$ 2.907,0</text></g>
<g transform="translate(0,866.9)"><text x="76.5" y=".6" class="d">08/01/2017</text><text x="216" class="c">R$ 489,5</text><text x="376" class="c">R$ 489,5</text><text x="537" class="c">1</text><text x="644" class="c">R$ 489,5</text></g>
<g transform="translate(0,916.05)"><text x="76.5" y=".6" class="d">09/01/2017</text><text x="216" class="c">R$ 3.876,0</text><text x="376" class="c">R$ 1.292,0</text><text x="537" class="c">3</text><text x="791" class="c">R$ 1.292,0</text><text x="938.5" class="c">R$ 1.292,0</text><text x="1086" class="c">R$ 1.292,0</text></g>
<g transform="translate(0,965.2)"><text x="76.5" y=".6" class="d">10/01/2017</text><text x="216" class="c">R$ 1.556,8</text><text x="376" class="c">R$ 1.556,8</text><text x="537" class="c">1</text><text x="791" class="c">R$ 1.556,8</text></g>
<g transform="translate(0,1014.35)"><text x="76.5" y=".6" class="d">11/01/2017</text><text x="216" class="c">R$ 7.736,0</text><text x="376" class="c">R$ 1.934,0</text><text x="537" class="c">4</text><text x="791" class="c">R$ 1.934,0</text><text x="938.5" class="c">R$ 1.934,0</text><text x="1086" class="c">R$ 1.934,0</text><text x="1233.5" class="c">R$ 1.934,0</text></g>
<g transform="translate(0,1063.5)"><text x="76.5" y=".6" class="d">12/01/2017</text><text x="216" class="c">R$ 293,7</text><text x="376" class="c">R$ 293,7</text><text x="537" class="c">1</text><text x="644" class="c">R$ 293,7</text></g>

<!-- freeze panes -->
<rect x="0" y="541.5" width="2022" height="1.6" fill="#a0a0a0"/>
<rect x="627.2" y="285" width="1.6" height="953" fill="#a0a0a0"/>

<!-- vertical scrollbar -->
<rect x="2021.5" y="280" width="26.5" height="958" fill="#e6e6e6"/>
<rect x="2021" y="308" width="1.2" height="930" fill="#a8a8a8"/>
<rect x="2023.5" y="308" width="22" height="910" fill="#dcdcdc"/>
<rect x="2023.5" y="287" width="22" height="21.5" fill="#fff" stroke="#cfcfcf"/>
<path d="M2029 302H2040L2034.5 296Z" fill="#777"/>
<rect x="2023.5" y="309.5" width="22" height="22" fill="#fff" stroke="#cfcfcf"/>
<rect x="2023.5" y="1217" width="22" height="21" fill="#fff" stroke="#cfcfcf"/>
<path d="M2029 1224H2040L2034.5 1230Z" fill="#777"/>

<!-- sheet tabs -->
<rect y="1238" width="2048" height="29" fill="#e6e6e6"/>
<rect y="1237.5" width="2048" height="1.2" fill="#b5b5b5"/>
<rect y="1266.5" width="2048" height="1.3" fill="#c8c8c8"/>
<rect x="207.5" y="1238" width="61.5" height="28" fill="#fff"/>
<rect x="207.5" y="1264.5" width="61.5" height="2" fill="#217346"/>
<path d="M29 1248L24 1253L29 1258Z" fill="#c4c4c4"/>
<path d="M52 1248L57 1253L52 1258Z" fill="#c4c4c4"/>
<g fill="#c4c4c4">
<rect x="99" y="1240" width="1" height="25"/><rect x="154" y="1240" width="1" height="25"/><rect x="317" y="1240" width="1" height="25"/><rect x="394" y="1240" width="1" height="25"/><rect x="471.5" y="1240" width="1" height="25"/><rect x="545" y="1240" width="1" height="25"/><rect x="584" y="1240" width="1" height="25"/><rect x="663.5" y="1240" width="1" height="25"/><rect x="741.5" y="1240" width="1" height="25"/><rect x="820" y="1240" width="1" height="25"/><rect x="899" y="1240" width="1" height="25"/><rect x="941.5" y="1240" width="1" height="25"/><rect x="997.5" y="1240" width="1" height="25"/><rect x="1051" y="1240" width="1" height="25"/><rect x="1100.5" y="1240" width="1" height="25"/>
</g>
<text x="108" y="1257.5" class="st" textLength="35.5" lengthAdjust="spacingAndGlyphs">CAD</text>
<text x="164" y="1257.5" class="st" textLength="32.5" lengthAdjust="spacingAndGlyphs">LAN</text>
<text x="216" y="1257.5" class="st" style="fill:#217346;font-weight:bold" textLength="44" lengthAdjust="spacingAndGlyphs">PREV</text>
<text x="279" y="1257.5" class="st" textLength="28" lengthAdjust="spacingAndGlyphs">REL</text>
<text x="328" y="1257.5" class="st" textLength="54.5" lengthAdjust="spacingAndGlyphs">REL (2)</text>
<text x="405" y="1257.5" class="st" textLength="55" lengthAdjust="spacingAndGlyphs">REL (3)</text>
<text x="482" y="1257.5" class="st" textLength="51.5" lengthAdjust="spacingAndGlyphs">REL_RI</text>
<text x="554" y="1257.5" class="st" textLength="20.5" lengthAdjust="spacingAndGlyphs">SA</text>
<text x="595" y="1257.5" class="st" textLength="56" lengthAdjust="spacingAndGlyphs">DASH1</text>
<text x="673" y="1257.5" class="st" textLength="57" lengthAdjust="spacingAndGlyphs">DASH2</text>
<text x="752" y="1257.5" class="st" textLength="56" lengthAdjust="spacingAndGlyphs">DASH3</text>
<text x="831" y="1257.5" class="st" textLength="56" lengthAdjust="spacingAndGlyphs">DASH4</text>
<text x="908.5" y="1257.5" class="st" textLength="21.5" lengthAdjust="spacingAndGlyphs">INI</text>
<text x="951" y="1257.5" class="st" textLength="36.5" lengthAdjust="spacingAndGlyphs">DUV</text>
<text x="1006" y="1257.5" class="st" textLength="34.5" lengthAdjust="spacingAndGlyphs">SUG</text>
<text x="1060" y="1257.5" class="st" textLength="30.5" lengthAdjust="spacingAndGlyphs">LUZ</text>
<circle cx="1145" cy="1253.7" r="10" fill="none" stroke="#8a8a8a" stroke-width="1.4"/>
<path d="M1139.5 1253.7H1150.5M1145 1248.2V1259.2" stroke="#777" stroke-width="2.2"/>

<!-- horizontal scrollbar -->
<g fill="#a8a8a8"><rect x="1741.5" y="1247" width="2.2" height="2.5"/><rect x="1741.5" y="1252" width="2.2" height="2.5"/><rect x="1741.5" y="1257" width="2.2" height="2.5"/></g>
<rect x="1759" y="1242" width="262" height="22" fill="#d9d9d9"/>
<rect x="1759" y="1242" width="22" height="22" fill="#fff" stroke="#cfcfcf"/>
<rect x="1781" y="1242" width="23" height="22" fill="#fff" stroke="#cfcfcf"/>
<rect x="2009" y="1242" width="12.5" height="22" fill="#fff" stroke="#cfcfcf"/>
<path d="M1773 1247.5L1767.5 1253L1773 1258.5Z" fill="#666"/>
<path d="M2012 1247.5L2017.5 1253L2012 1258.5Z" fill="#666"/>

<!-- status bar -->
<rect y="1268" width="2048" height="43" fill="#f3f3f3"/>
<text x="9" y="1294" style="fill:#404040;font-size:14.5px" textLength="41.5" lengthAdjust="spacingAndGlyphs">Pronto</text>
<rect x="78.5" y="1281.5" width="19" height="17.5" fill="#f3f3f3" stroke="#8a8a8a"/>
<circle cx="81" cy="1283.5" r="4" fill="#666"/>
<rect x="85.5" y="1281.5" width="12" height="3.5" fill="#777"/>
<path d="M81 1289H96M81 1292H96M81 1295H96" stroke="#9a9a9a" stroke-dasharray="1.5 1.3"/>
<rect x="1692" y="1268" width="44.5" height="43" fill="#c6c6c6"/>
<rect x="1703.5" y="1279.5" width="20.5" height="20.5" fill="none" stroke="#777"/>
<path d="M1703.5 1286.5H1724M1703.5 1293.5H1724M1710.5 1279.5V1300M1717.5 1279.5V1300" stroke="#888"/>
<rect x="1747.5" y="1279.5" width="23" height="20.5" fill="#f7f7f7" stroke="#aaa"/>
<rect x="1752.5" y="1282" width="13" height="15.5" fill="none" stroke="#999"/>
<path d="M1755 1285.5H1763M1755 1288.5H1763M1755 1291.5H1763M1755 1294.5H1763" stroke="#aaa"/>
<rect x="1792.5" y="1279" width="22.5" height="21" fill="#f7f7f7" stroke="#aaa"/>
<path d="M1792.5 1292H1808.5V1279M1801 1279V1292" fill="none" stroke="#aaa"/>
<rect x="1832" y="1288.2" width="8.5" height="2.4" fill="#666"/>
<rect x="1847" y="1288.7" width="135" height="1.5" fill="#b4b4b4"/>
<rect x="1915" y="1285" width="1" height="9" fill="#aaa"/>
<rect x="1904.5" y="1281.5" width="6.5" height="15" fill="#666"/>
<path d="M1987 1289.3H1998M1992.5 1284V1295" stroke="#666" stroke-width="2.2"/>
<text x="2012" y="1295" style="fill:#404040;font-size:14.5px" textLength="26.5" lengthAdjust="spacingAndGlyphs">90%</text>

<!-- black taskbar strip -->
<rect y="1311" width="2048" height="9" fill="#060606"/>
<rect x="535" y="1311" width="61" height="9" fill="#2b2b2b"/>
<rect x="598" y="1311" width="2" height="9" fill="#222"/>
<rect x="2042" y="1311" width="1" height="9" fill="#555"/>
</svg>
</body>
</html>
